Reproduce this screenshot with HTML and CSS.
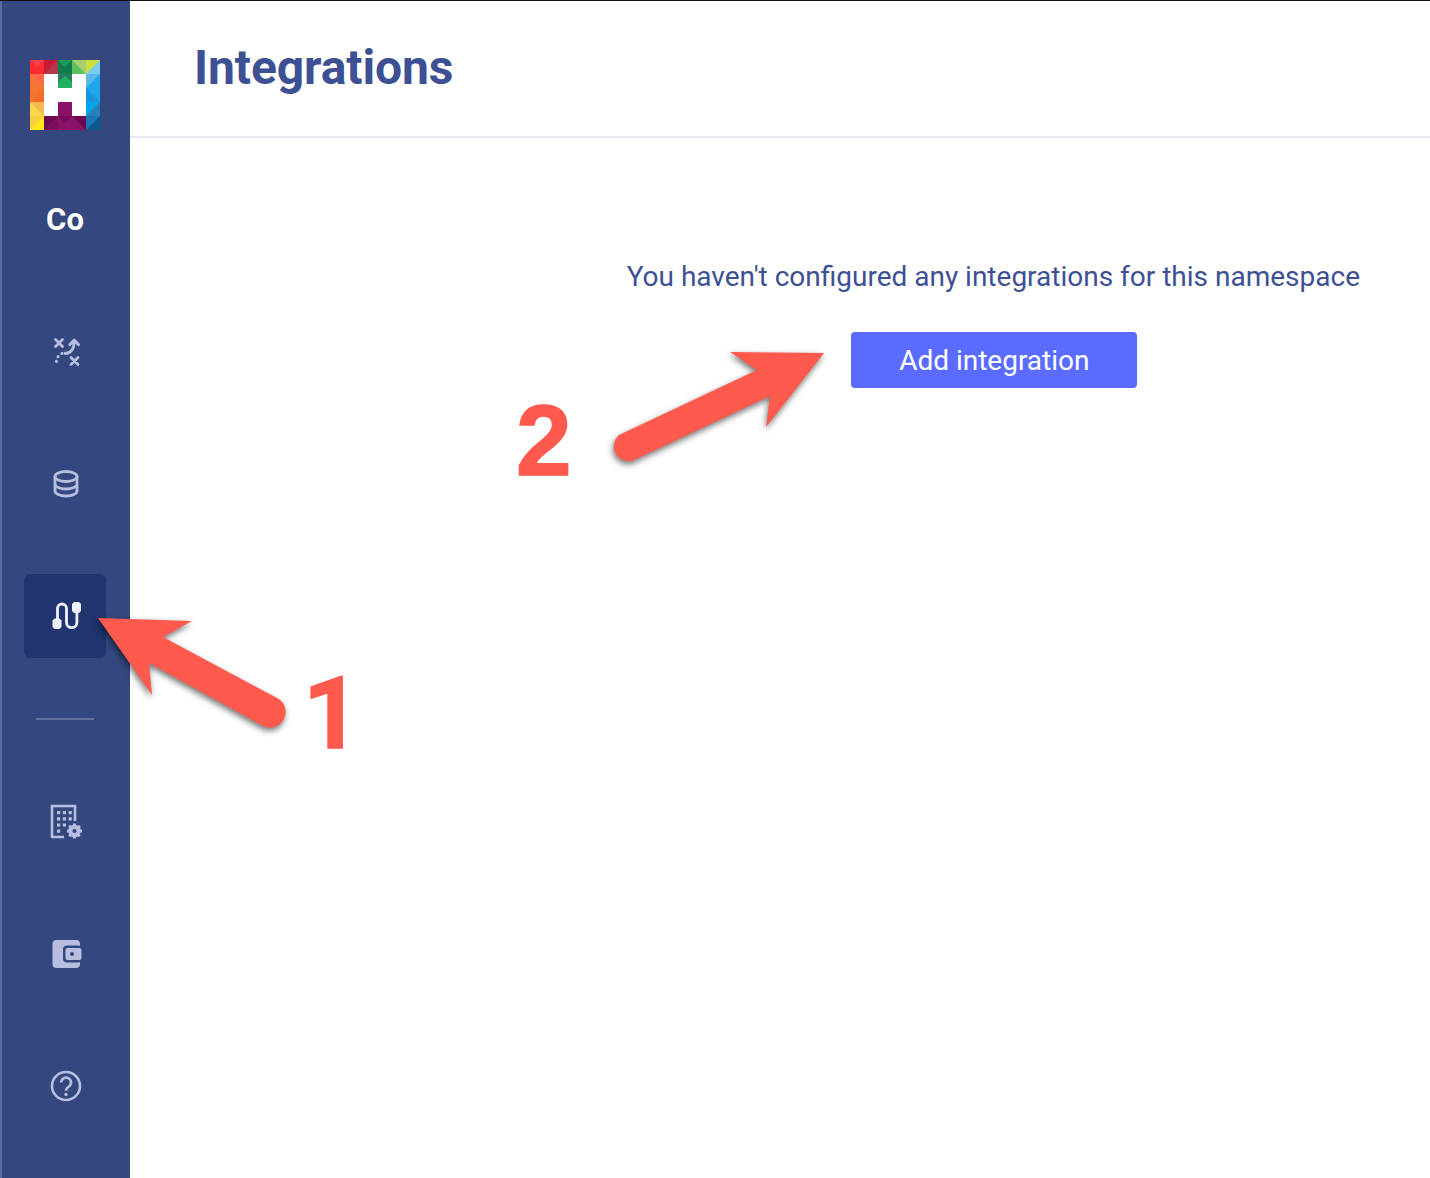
FILE: index.html
```html
<!DOCTYPE html>
<html lang="en">
<head>
<meta charset="utf-8">
<title>Integrations</title>
<link rel="stylesheet" href="styles.css">
</head>
<body>
<div class="topline"></div>
<div class="app">
  <aside class="sidebar">
    <svg class="logo" viewBox="0 0 70 70" width="70" height="70" aria-label="Logo">
      <rect x="0" y="0" width="14" height="14" fill="#ff2a2d"/><path d="M0 0H14L7 7Z" fill="#ee4049"/>
      <rect x="14" y="0" width="14" height="14" fill="#b03a4c"/><path d="M14 0H28L21 7Z M14 0V14L21 7Z" fill="#c81b3a"/>
      <rect x="28" y="0" width="14" height="14" fill="#0f7d4a"/><path d="M28 0H42L35 7Z" fill="#14a05a"/>
      <rect x="42" y="0" width="14" height="14" fill="#5cc161"/><path d="M42 0H56V14Z" fill="#a8d070"/>
      <rect x="56" y="0" width="14" height="14" fill="#78cdf0"/><path d="M56 0H70L56 14Z" fill="#cde040"/>
      <rect x="0" y="14" width="14" height="14" fill="#f57632"/><path d="M0 14H14V28Z" fill="#fa6a4a"/>
      <rect x="56" y="14" width="14" height="14" fill="#20a8ec"/><path d="M56 14H70L56 28Z" fill="#5ab8e8"/>
      <rect x="0" y="28" width="14" height="14" fill="#f56c28"/><path d="M0 28H14L0 42Z" fill="#f57632"/>
      <rect x="56" y="28" width="14" height="14" fill="#1fa8ec"/><path d="M56 28L70 42H56Z" fill="#1796dc"/>
      <rect x="0" y="42" width="14" height="14" fill="#f8d84a"/><path d="M0 42H14V56Z" fill="#f8b850"/>
      <rect x="56" y="42" width="14" height="14" fill="#2a80b8"/><path d="M56 42H70L56 56Z" fill="#00a6ec"/>
      <rect x="0" y="56" width="14" height="14" fill="#ffe81a"/><path d="M0 56H14L0 70Z" fill="#f8d040"/>
      <rect x="14" y="56" width="14" height="14" fill="#6a0a50"/><path d="M14 70L28 56V70Z" fill="#7d0c5e"/>
      <rect x="28" y="56" width="14" height="14" fill="#8a1068"/><path d="M28 56H42L35 63Z" fill="#700a58"/>
      <rect x="42" y="56" width="14" height="14" fill="#6a0a50"/><path d="M42 56V70L56 70Z" fill="#8a1068"/>
      <rect x="56" y="56" width="14" height="14" fill="#0a5a90"/><path d="M56 56H70L56 70Z" fill="#1878b8"/>
      <path d="M14 14H28V28H42V14H56V56H42V42H28V56H14Z" fill="#ffffff"/>
      <rect x="28" y="14" width="14" height="14" fill="#20b060"/>
      <path d="M28 14H42V22L35 16Z" fill="#2d7a60"/>
      <path d="M28 14L35 16L28 22Z" fill="#2d7a60"/>
      <rect x="28" y="42" width="14" height="14" fill="#8a1068"/>
    </svg>

    <nav class="nav">
      <div class="nav-item org">Co</div>
      <div class="nav-item">
        <svg class="icon" viewBox="47 334 36 36" width="36" height="36">
          <path class="st" d="M55.500 339.500l7 7M62.500 339.500l-7 7M71 357.500l7 7M78 357.500l-7 7M65 353.500c5.800 0 9.200-3.500 9.200-13M69.800 344.800L74.200 340l4.400 4.800"/>
          <path class="st dots" d="M62 353.500C58.500 354.500 56.500 358 56 364.500"/>
        </svg>
      </div>
      <div class="nav-item">
        <svg class="icon" viewBox="47 466 36 36" width="36" height="36">
          <path class="st" d="M55 476.500v14.500c0 2.800 4.900 5 11 5s11-2.200 11-5v-14.500M55 484c0 2.800 4.900 5 11 5s11-2.200 11-5"/>
          <ellipse class="st" cx="66" cy="476.500" rx="11" ry="5"/>
        </svg>
      </div>
      <div class="nav-item active">
        <svg class="icon" viewBox="47 598 36 36" width="36" height="36">
          <path class="wire" d="M57.500 620v-11.500a4.500 4.500 0 0 1 9 0v14a5.200 5.200 0 0 0 10.400 0v-11"/>
          <path class="plug" d="M54.500 618.500h5l2 2v6.500l-2 2h-5l-2-2v-6.500Z"/>
          <path class="plug" d="M74 602h5l2 2v7l-2 2h-5l-2-2v-7Z"/>
        </svg>
      </div>
    </nav>

    <div class="divider"></div>

    <nav class="nav">
      <div class="nav-item">
        <svg class="icon" viewBox="47 804 36 36" width="36" height="36">
          <path class="thin" d="M52 838V806H75V821M52 837H64"/>
          <path class="dots-grid" d="M57 811h3.200v3.200H57zM62.800 811h3.200v3.200h-3.200zM68.600 811h3.200v3.200h-3.200zM57 817.200h3.200v3.200H57zM62.800 817.200h3.200v3.200h-3.200zM68.600 817.200h3.200v3.200h-3.200zM57 823.400h3.200v3.200H57zM62.800 823.400h3.200v3.200h-3.200zM57 829.600h3.200v3.200H57z"/>
          <circle class="gear-ring" cx="74.500" cy="831" r="4.200"/>
          <path class="gear-teeth" d="M74.500 823.500v3M74.500 835.500v3M67 831h3M79 831h3M69.200 825.700l2.100 2.100M77.700 834.200l2.100 2.100M79.800 825.700l-2.100 2.100M71.300 834.200l-2.100 2.100"/>
        </svg>
      </div>
      <div class="nav-item">
        <svg class="icon" viewBox="47 936 36 36" width="36" height="36">
          <rect class="fill" x="52.500" y="940" width="27.500" height="28" rx="4"/>
          <rect class="cut" x="63" y="945.500" width="19" height="17" rx="4"/>
          <rect class="fill" x="65.500" y="948" width="16" height="12" rx="2"/>
          <circle class="cut" cx="72" cy="954" r="2"/>
        </svg>
      </div>
      <div class="nav-item">
        <svg class="icon" viewBox="47 1068 36 36" width="36" height="36">
          <circle class="thin" cx="66" cy="1086" r="14"/>
          <path class="thin q" d="M61.200 1082.500a4.900 4.900 0 1 1 7.700 4c-1.900 1.300-2.900 2.200-2.900 4.300"/>
          <circle class="fill" cx="66" cy="1094.500" r="1.700"/>
        </svg>
      </div>
    </nav>
  </aside>

  <main class="main">
    <header class="header">
      <h1 class="title">Integrations</h1>
    </header>
    <section class="empty">
      <div class="empty-box">
        <p class="empty-text">You haven't configured any integrations for this namespace</p>
        <button class="btn" type="button">Add integration</button>
      </div>
    </section>
  </main>
</div>

<svg class="arrows" viewBox="0 0 1430 1178" width="1430" height="1178" aria-hidden="true">
  <path class="arrow" d="M98 618L192 621L163 637L277 698A15.500 15.500 0 0 1 263 726L149 663L152 695Z"/>
  <path class="arrow" d="M824 353L730 352L757 370L619 435A15 15 0 0 0 632 461L770 396L766 427Z"/>
</svg>
<span class="num num-one">1</span>
<span class="num num-two">2</span>
</body>
</html>
```

FILE: styles.css
```css
* { box-sizing: border-box; }
html, body { margin: 0; padding: 0; }
body {
  width: 1430px;
  height: 1178px;
  overflow: hidden;
  position: relative;
  background: #fff;
  font-family: Roboto, "Liberation Sans", sans-serif;
}
.topline { height: 1px; background: #111; }
.app { display: flex; height: 1177px; }

.sidebar {
  width: 130px;
  flex: none;
  background: #34477e;
  border-left: 2px solid #5b6a9b;
  padding: 59px 24px 0 22px;
  display: flex;
  flex-direction: column;
}
.logo { display: block; margin: 0 auto 48px; flex: none; }
.nav { display: flex; flex-direction: column; gap: 48px; }
.nav-item {
  height: 84px;
  border-radius: 6px;
  display: flex;
  align-items: center;
  justify-content: center;
}
.nav-item.active { background: #20356f; }
.org { color: #fff; font-size: 31px; font-weight: 700; padding-bottom: 2px; }
.icon { display: block; flex: none; }

.st { fill: none; stroke: #b7bedf; stroke-width: 2.800; stroke-linecap: round; stroke-linejoin: round; }
.dots { stroke-dasharray: 0.100 5; stroke-width: 3; }
.thin { fill: none; stroke: #b7bedf; stroke-width: 2.600; }
.q { stroke-width: 2.600; }
.fill { fill: #b7bedf; }
.cut { fill: #34477e; }
.dots-grid { fill: #b7bedf; }
.gear-ring { fill: #34477e; stroke: #b7bedf; stroke-width: 4.200; }
.gear-teeth { fill: none; stroke: #b7bedf; stroke-width: 3; }
.wire { fill: none; stroke: #eef0fb; stroke-width: 2.800; }
.plug { fill: #eef0fb; }

.divider { height: 2px; width: 58px; background: #63719f; margin: 60px auto 60px 12px; flex: none; }

.main { flex: 1; display: flex; flex-direction: column; min-width: 0; }
.header {
  height: 137px;
  border-bottom: 2px solid #e5e7f3;
  padding-left: 64px;
  flex: none;
}
.title {
  margin: 0;
  padding-top: 38px;
  color: #3d5094;
  font-size: 48px;
  line-height: 58px;
  font-weight: 700;
  letter-spacing: -0.100px;
}
.empty { display: flex; justify-content: flex-end; padding: 122px 70px 0 0; }
.empty-box { display: flex; flex-direction: column; align-items: center; }
.empty-text { margin: 0 0 38px; color: #3d5094; font-size: 28px; line-height: 34px; }
.btn {
  width: 286px;
  height: 56px;
  margin-left: 2px;
  border: 0;
  border-radius: 4px;
  background: #5a6cff;
  color: #fff;
  font: 400 28px Roboto, "Liberation Sans", sans-serif;
}

.arrows { position: absolute; left: 0; top: 0; pointer-events: none; }
.arrow { fill: #ff5a4d; filter: drop-shadow(-1px 3px 3px rgba(0, 0, 0, 0.55)); }
.num {
  position: absolute;
  color: #ff5a4d;
  font-weight: 700;
  font-size: 100px;
  line-height: 100px;
  -webkit-text-stroke: 1.500px #ff5a4d;
}
.num-one { left: 303px; top: 664px; font-family: Roboto, sans-serif; }
.num-two { left: 516px; top: 390px; font-family: "Liberation Sans", Arial, sans-serif; }
```
